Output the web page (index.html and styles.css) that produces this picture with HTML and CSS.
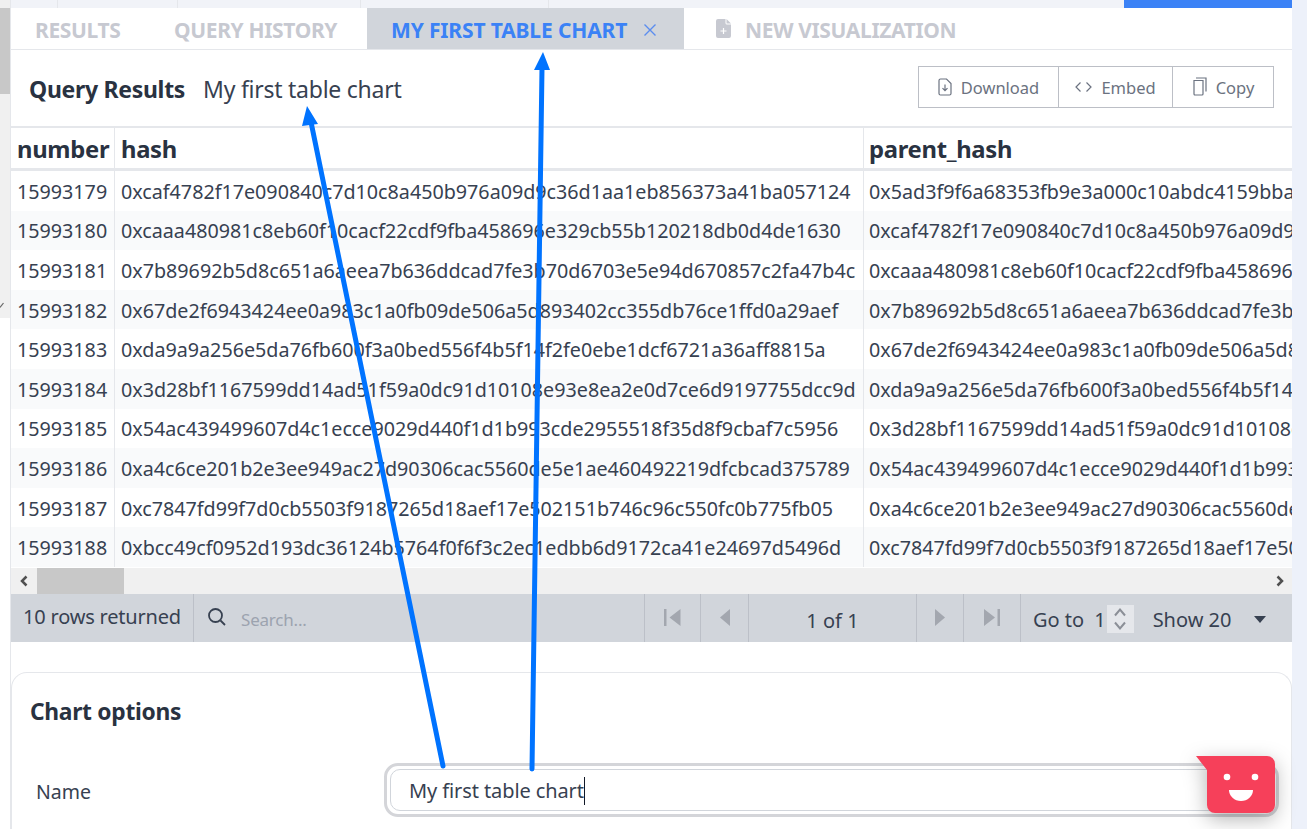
FILE: index.html
```html
<!DOCTYPE html>
<html lang="en">
<head>
<meta charset="utf-8">
<title>Query Results</title>
<link rel="stylesheet" href="styles.css">
</head>
<body>
<div class="page">
  <aside class="gutter">
    <div class="gutter-thumb"></div>
    <svg class="gutter-mark" width="4" height="6" viewBox="0 0 4 6"><path d="M0 5.500L3.500 1"/></svg>
  </aside>
  <main class="main">
    <div class="topstrip">
      <span class="top-cell tc1"></span><span class="top-cell tc2"></span><span class="top-cell tc3"></span><span class="top-cell tc4"></span>
      <span class="top-active"></span>
    </div>
    <nav class="tabs">
      <a class="tab tab-results">RESULTS</a>
      <a class="tab tab-history">QUERY HISTORY</a>
      <a class="tab tab-active">MY FIRST TABLE CHART
        <svg class="tab-x" width="14" height="14" viewBox="0 0 14 14"><path d="M1.500 1.500l11 11M12.500 1.500l-11 11"/></svg>
      </a>
      <a class="tab tab-new">
        <svg class="tab-file" width="15" height="19" viewBox="0 0 15 19"><path d="M2 0h7.500v4a1.500 1.500 0 0 0 1.500 1.500h4V17a2 2 0 0 1-2 2H2a2 2 0 0 1-2-2V2a2 2 0 0 1 2-2z"/><path d="M10.500 0L15 4.500h-4.500z"/><path class="plus" d="M7.500 9v6M4.500 12h6"/></svg>
        NEW VISUALIZATION
      </a>
    </nav>
    <header class="results-head">
      <h2 class="results-title">Query Results</h2>
      <span class="results-name">My first table chart</span>
      <div class="btn-group">
        <button class="btn btn-dl"><svg width="14" height="18" viewBox="0 0 14 18"><path d="M2.500 1h6l4.500 4.500v10a1.500 1.500 0 0 1-1.500 1.500h-9A1.500 1.500 0 0 1 1 15.500v-13A1.500 1.500 0 0 1 2.500 1z"/><path d="M7 6.500v6M4.500 10.200L7 12.700l2.500-2.500"/></svg>Download</button>
        <button class="btn btn-embed"><svg width="17" height="12" viewBox="0 0 17 12"><path d="M5.500 1.500L1 6l4.500 4.500M11.500 1.500L16 6l-4.500 4.500"/></svg>Embed</button>
        <button class="btn btn-copy"><svg width="15" height="20" viewBox="0 0 15 20"><path d="M4 1h10v13.500M2 3.500h9v13.500a1 1 0 0 1-1 1H3a1 1 0 0 1-1-1z"/></svg>Copy</button>
      </div>
    </header>
    <div class="table-wrap">
      <table class="data">
        <colgroup><col class="c1"><col class="c2"><col class="c3"></colgroup>
        <thead><tr><th>number</th><th>hash</th><th>parent_hash</th></tr></thead>
        <tbody>
          <tr><td>15993179</td><td>0xcaf4782f17e090840c7d10c8a450b976a09d9c36d1aa1eb856373a41ba057124</td><td>0x5ad3f9f6a68353fb9e3a000c10abdc4159bba1e4a7c3</td></tr>
          <tr><td>15993180</td><td>0xcaaa480981c8eb60f10cacf22cdf9fba458696e329cb55b120218db0d4de1630</td><td>0xcaf4782f17e090840c7d10c8a450b976a09d9c36d1aa</td></tr>
          <tr><td>15993181</td><td>0x7b89692b5d8c651a6aeea7b636ddcad7fe3b70d6703e5e94d670857c2fa47b4c</td><td>0xcaaa480981c8eb60f10cacf22cdf9fba458696e329cb</td></tr>
          <tr><td>15993182</td><td>0x67de2f6943424ee0a983c1a0fb09de506a5d893402cc355db76ce1ffd0a29aef</td><td>0x7b89692b5d8c651a6aeea7b636ddcad7fe3b70d6703e</td></tr>
          <tr><td>15993183</td><td>0xda9a9a256e5da76fb600f3a0bed556f4b5f14f2fe0ebe1dcf6721a36aff8815a</td><td>0x67de2f6943424ee0a983c1a0fb09de506a5d893402cc</td></tr>
          <tr><td>15993184</td><td>0x3d28bf1167599dd14ad51f59a0dc91d10108e93e8ea2e0d7ce6d9197755dcc9d</td><td>0xda9a9a256e5da76fb600f3a0bed556f4b5f14f2fe0eb</td></tr>
          <tr><td>15993185</td><td>0x54ac439499607d4c1ecce9029d440f1d1b993cde2955518f35d8f9cbaf7c5956</td><td>0x3d28bf1167599dd14ad51f59a0dc91d10108e93e8ea2</td></tr>
          <tr><td>15993186</td><td>0xa4c6ce201b2e3ee949ac27d90306cac5560de5e1ae460492219dfcbcad375789</td><td>0x54ac439499607d4c1ecce9029d440f1d1b993cde2955</td></tr>
          <tr><td>15993187</td><td>0xc7847fd99f7d0cb5503f9187265d18aef17e502151b746c96c550fc0b775fb05</td><td>0xa4c6ce201b2e3ee949ac27d90306cac5560de5e1ae46</td></tr>
          <tr><td>15993188</td><td>0xbcc49cf0952d193dc36124b5764f0f6f3c2ec1edbb6d9172ca41e24697d5496d</td><td>0xc7847fd99f7d0cb5503f9187265d18aef17e502151b7</td></tr>
        </tbody>
      </table>
    </div>
    <div class="hscroll">
      <svg class="hs-arrow" width="12" height="14" viewBox="0 0 12 14"><path d="M8.500 2.500L4 7l4.500 4.500"/></svg>
      <div class="hs-thumb"></div>
      <svg class="hs-arrow hs-right" width="12" height="14" viewBox="0 0 12 14"><path d="M3.500 2.500L8 7l-4.500 4.500"/></svg>
    </div>
    <footer class="pager">
      <div class="rows">10 rows returned</div>
      <div class="search">
        <svg width="20" height="20" viewBox="0 0 20 20"><circle cx="8.500" cy="8.500" r="6.500"/><path d="M13.500 13.500L18 18"/></svg>
        <span class="search-ph">Search...</span>
      </div>
      <div class="pg pg-first"><svg width="17" height="17" viewBox="0 0 17 17"><path d="M0 0h2.500v17H0zM16.500 0v17L5.500 8.500z"/></svg></div>
      <div class="pg pg-prev"><svg width="10" height="17" viewBox="0 0 10 17"><path d="M10 0v17L0 8.500z"/></svg></div>
      <div class="pg-count">1 of 1</div>
      <div class="pg pg-next"><svg width="10" height="17" viewBox="0 0 10 17"><path d="M0 0v17L10 8.500z"/></svg></div>
      <div class="pg pg-last"><svg width="16" height="17" viewBox="0 0 16 17"><path d="M0 0v17L11 8.500zM13.500 0H16v17h-2.500z"/></svg></div>
      <div class="goto">
        <span>Go to</span><span class="goto-val">1</span>
        <span class="spin"><svg width="14" height="26" viewBox="0 0 14 26"><path d="M2 9.500L7 3.500l5 6M2 16.500l5 6 5-6"/></svg></span>
        <span class="show">Show 20</span>
        <svg class="caret" width="12" height="7" viewBox="0 0 12 7"><path d="M0 0h12L6 7z"/></svg>
      </div>
    </footer>
    <section class="card">
      <h3 class="card-title">Chart options</h3>
      <div class="field">
        <label class="field-label">Name</label>
        <div class="input-ring"><div class="input">My first table chart<span class="caretline"></span></div></div>
      </div>
    </section>
  </main>
  <aside class="rail"></aside>
</div>
<svg class="arrows" width="1307" height="829" viewBox="0 0 1307 829">
  <path class="arrow-line" d="M443 766L311 122M532 769L542 68"/>
  <path class="arrow-head" d="M307 106L318 124L302 126zM543 52L550 70L534 70z"/>
</svg>
<div class="chat">
  <svg width="79" height="57" viewBox="0 0 79 57"><path d="M0 0H71a8 8 0 0 1 8 8V49a8 8 0 0 1-8 8H19a8 8 0 0 1-8-8V14z" fill="#f6405a"/><circle cx="31" cy="21" r="3.300" fill="#fff"/><circle cx="59" cy="21" r="3.300" fill="#fff"/><path d="M33 34h24a12 11 0 0 1-24 0z" fill="#fff"/></svg>
</div>
</body>
</html>
```
FILE: styles.css
```css
* { box-sizing: border-box; }
html, body { margin: 0; height: 829px; overflow: hidden; }
body { font-family: "Noto Sans", "Open Sans", sans-serif; color: #374151; background: #fff; position: relative; }
.page { display: flex; height: 829px; }
.gutter { width: 10px; flex: none; height: 318px; background: #f0f0f0; }
.gutter-thumb { margin-top: 8px; width: 10px; height: 86px; background: #c8c8c8; }
.gutter-mark { display: block; margin-top: 208px; fill: none; stroke: #666; stroke-width: 1.200; }
.main { flex: 1; min-width: 0; display: flex; flex-direction: column; overflow: hidden; background: #fff; border-left: 1px solid #e5e7eb; }
.rail { width: 15px; flex: none; background: #edf1fa; }
.topstrip { height: 8px; flex: none; background: #f1f3f8; display: flex; }
.top-cell { height: 8px; border-right: 1px solid #e5e7eb; }
.tc1 { width: 47px; }
.tc2 { width: 120px; }
.tc3 { width: 183px; }
.tc4 { width: 188px; }
.top-active { margin-left: auto; width: 168px; height: 8px; background: #3b82f6; }
.tabs { height: 42px; flex: none; display: flex; border-bottom: 1px solid #e5e7eb; }
.tab { font-size: 21px; font-weight: 700; color: #c7c9d1; display: flex; align-items: center; height: 41px; padding-top: 2px; letter-spacing: -0.35px; }
.tab-results { padding-left: 24px; width: 139px; }
.tab-history { padding-left: 24px; width: 217px; }
.tab-active { width: 317px; padding-left: 24px; background: #d1d5db; color: #3b82f6; letter-spacing: -0.15px; }
.tab-x { margin-left: 16px; fill: none; stroke: #5b8def; stroke-width: 1.400; }
.tab-new { padding-left: 32px; }
.tab-file { margin-right: 14px; margin-top: -3px; fill: #c7c9d1; }
.tab-file .plus { fill: none; stroke: #fff; stroke-width: 1.200; }
.results-head { height: 78px; flex: none; display: flex; align-items: center; padding: 0 18px; border-bottom: 2px solid #e5e7eb; }
.results-title { margin: 1px 0 0; font-size: 23px; font-weight: 700; color: #293241; letter-spacing: -0.3px; }
.results-name { font-size: 23px; margin: 1px 0 0 18px; color: #374151; letter-spacing: -0.25px; }
.btn-group { margin-left: auto; margin-bottom: 2px; display: flex; height: 42px; border: 1px solid #bcbfc6; }
.btn { font: inherit; font-size: 16.500px; color: #6b7280; background: #fff; border: 0; border-right: 1px solid #bcbfc6; display: flex; align-items: center; justify-content: center; gap: 9px; padding: 0; }
.btn svg { fill: none; stroke: #6b7280; stroke-width: 1.200; }
.btn-dl { width: 140px; }
.btn-embed { width: 114px; }
.btn-copy { width: 100px; border-right: 0; }
.table-wrap { height: 440px; flex: none; overflow: hidden; }
.data { border-collapse: separate; border-spacing: 0; table-layout: fixed; width: 1700px; font-size: 19.720px; }
.c1 { width: 104px; }
.c2 { width: 749px; }
.c3 { width: 847px; }
.data th { height: 43px; text-align: left; padding: 2px 0 0 6px; font-size: 23.800px; font-weight: 700; color: #293241; border-bottom: 3px solid #e5e7eb; border-right: 1px solid #e5e7eb; letter-spacing: -0.3px; white-space: nowrap; overflow: hidden; }
.data td { height: 39.600px; padding: 1px 0 0 6px; white-space: nowrap; overflow: hidden; border-right: 1px solid #e5e7eb; color: #374151; }
.data th:nth-child(3), .data td:nth-child(3) { padding-left: 5px; }
.data tbody tr:nth-child(even) td { background: #f9fafb; }
.hscroll { height: 26px; flex: none; background: #f0f0f0; display: flex; align-items: center; position: relative; }
.hs-arrow { fill: none; stroke: #505050; stroke-width: 2.500; margin-left: 7px; }
.hs-thumb { width: 87px; height: 26px; background: #c8c8c8; margin-left: 7px; }
.hs-right { margin-left: auto; margin-right: 6px; }
.pager { height: 48px; flex: none; background: #d1d5db; display: flex; align-items: stretch; font-size: 20px; color: #374151; }
.rows { width: 183px; flex: none; display: flex; align-items: center; padding-left: 12px; padding-bottom: 4px; border-right: 1px solid #bcc0c8; letter-spacing: -0.2px; }
.search { width: 451px; flex: none; display: flex; align-items: center; padding-left: 13px; gap: 14px; border-right: 1px solid #bcc0c8; }
.search svg { fill: none; stroke: #374151; stroke-width: 1.800; margin-bottom: 3px; }
.search-ph { color: #9ca3af; font-size: 17px; padding-top: 2px; letter-spacing: -0.2px; }
.pg { display: flex; align-items: center; justify-content: center; border-right: 1px solid #bcc0c8; }
.pg svg { fill: #a3a7af; margin-bottom: 2px; }
.pg-first { width: 56px; }
.pg-prev { width: 48px; }
.pg-count { width: 168px; display: flex; align-items: center; justify-content: center; border-right: 1px solid #bcc0c8; padding-top: 4px; }
.pg-next { width: 47px; }
.pg-last { width: 57px; }
.goto { flex: 1; display: flex; align-items: center; padding-left: 12px; padding-top: 2px; white-space: nowrap; }
.goto-val { margin-left: 10px; }
.spin { width: 27px; height: 28px; background: #e5e7eb; margin-left: 1px; display: flex; align-items: center; justify-content: center; }
.spin svg { fill: none; stroke: #8b8f97; stroke-width: 2; }
.show { margin-left: 19px; }
.caret { margin-left: 23px; fill: #374151; }
.card { margin-top: 30px; flex: 1; border: 1px solid #e5e7eb; border-bottom: 0; border-radius: 16px 16px 0 0; padding: 0 0 0 18px; }
.card-title { margin: 20px 0 0; padding-top: 1px; font-size: 22.800px; font-weight: 700; line-height: 36px; color: #293241; letter-spacing: -0.3px; }
.field { display: flex; align-items: center; margin-top: 33px; }
.field-label { width: 354px; padding: 2px 0 0 6px; font-size: 19.500px; color: #374151; }
.input-ring { flex: 1; margin-right: 12px; height: 54px; border: 3px solid #d4d5d9; border-radius: 14px; padding: 3px; background: #fff; }
.input { height: 100%; border: 1px solid #d1d5db; border-radius: 10px; padding: 1px 0 0 18px; font-size: 20px; display: flex; align-items: center; letter-spacing: -0.1px; }
.caretline { width: 1px; height: 28px; background: #111827; }
.arrows { position: absolute; left: 0; top: 0; pointer-events: none; }
.arrow-line { fill: none; stroke: #0073ff; stroke-width: 5; stroke-linecap: round; }
.arrow-head { fill: #0073ff; }
.chat { position: absolute; left: 1196px; top: 756px; width: 79px; height: 57px; filter: drop-shadow(0 6px 10px rgba(0,0,0,.3)); }
.chat svg { display: block; }
```
